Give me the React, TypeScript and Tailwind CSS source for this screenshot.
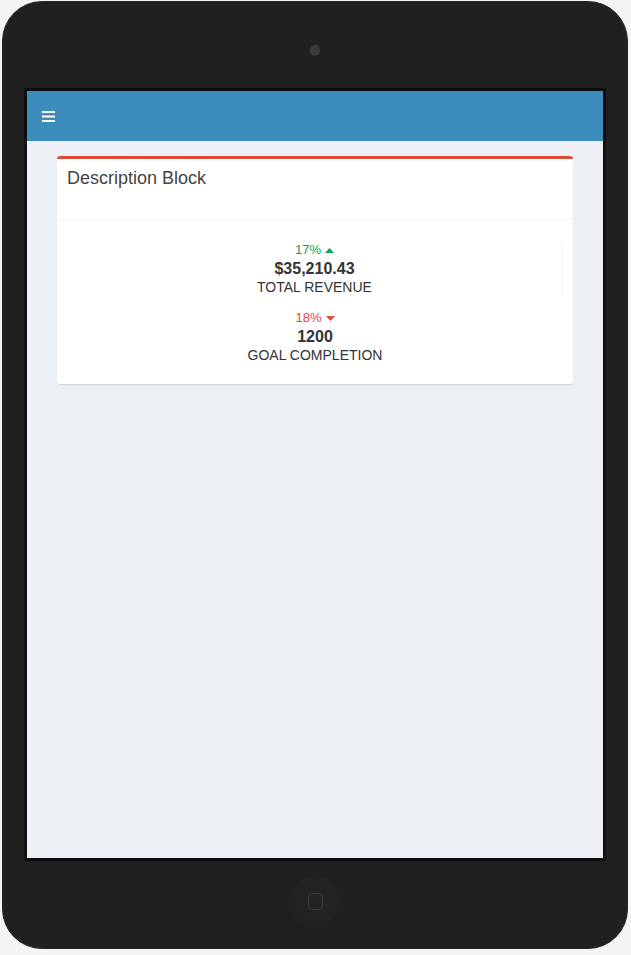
const Caret = ({ up, color }: { up: boolean; color: string }) => (
    <svg width="9" height="5" viewBox="0 0 9 5" className="ml-[4px]" style={{ color }}>
        {up ? <polygon points="0,5 4.5,0 9,5" fill="currentColor" /> : <polygon points="0,0 4.5,5 9,0" fill="currentColor" />}
    </svg>
);

const DescriptionBlock = ({
    pct,
    up,
    amount,
    label,
    border,
}: {
    pct: string;
    up: boolean;
    amount: string;
    label: string;
    border?: boolean;
}) => {
    const color = up ? "#00a65a" : "#dd4b39";
    return (
        <div className={"flex flex-col items-center text-center " + (border ? "border-r border-[#f4f4f4]" : "")}>
            <div className="flex items-center h-[18px] text-[13px] leading-[18px]" style={{ color }}>
                {pct}
                <Caret up={up} color={color} />
            </div>
            <div className="h-[19px] text-[16px] leading-[19px] font-bold text-[#333]">{amount}</div>
            <div className="h-[19px] text-[14px] leading-[19px] uppercase text-[#333]">{label}</div>
        </div>
    );
};

const App = () => {
    return (
        <div className="w-[631px] h-[955px] bg-[#f4f4f4] pt-[1px] pl-[2px] font-['Liberation_Sans',Arial,sans-serif]">
            <div className="w-[626px] h-[948px] rounded-[40px] bg-[#202020] border border-[#262626] flex flex-col items-center">
                <div className="mt-[43px] w-[10px] h-[11px] rounded-full bg-[#3a3a3a]" />
                <div className="mt-[32px] w-[582px] h-[773px] border-[3px] border-[#0f0f0f] rounded-[2px] bg-[#ecf0f5] flex flex-col">
                    <div className="h-[50px] bg-[#3c8dbc] flex items-center pl-[15px] shrink-0">
                        <svg width="13" height="12" viewBox="0 0 13 12">
                            <rect x="0" y="1" width="13" height="2" fill="#fff" />
                            <rect x="0" y="5.5" width="13" height="2" fill="#fff" />
                            <rect x="0" y="10" width="13" height="2" fill="#fff" />
                        </svg>
                    </div>
                    <div className="px-[30px] pt-[15px]">
                        <div className="bg-white border-t-[3px] border-[#dd4b39] rounded-[3px] shadow-[0_1px_1px_rgba(0,0,0,0.12)]">
                            <div className="h-[61px] pt-[9px] px-[10px] border-b border-[#f4f4f4]">
                                <h3 className="text-[18px] leading-[20px] text-[#444]">Description Block</h3>
                            </div>
                            <div className="px-[10px] pt-[21px] pb-[19px] flex flex-col gap-[12px]">
                                <DescriptionBlock pct="17%" up amount="$35,210.43" label="Total Revenue" border />
                                <DescriptionBlock pct="18%" up={false} amount="1200" label="Goal Completion" />
                            </div>
                        </div>
                    </div>
                </div>
                <div className="mt-[15px] w-[50px] h-[50px] rounded-full bg-[#232323] flex items-center justify-center">
                    <div className="w-[15px] h-[17px] rounded-[4px] border border-[#3a3a3a]" />
                </div>
            </div>
        </div>
    );
};

export default App;
